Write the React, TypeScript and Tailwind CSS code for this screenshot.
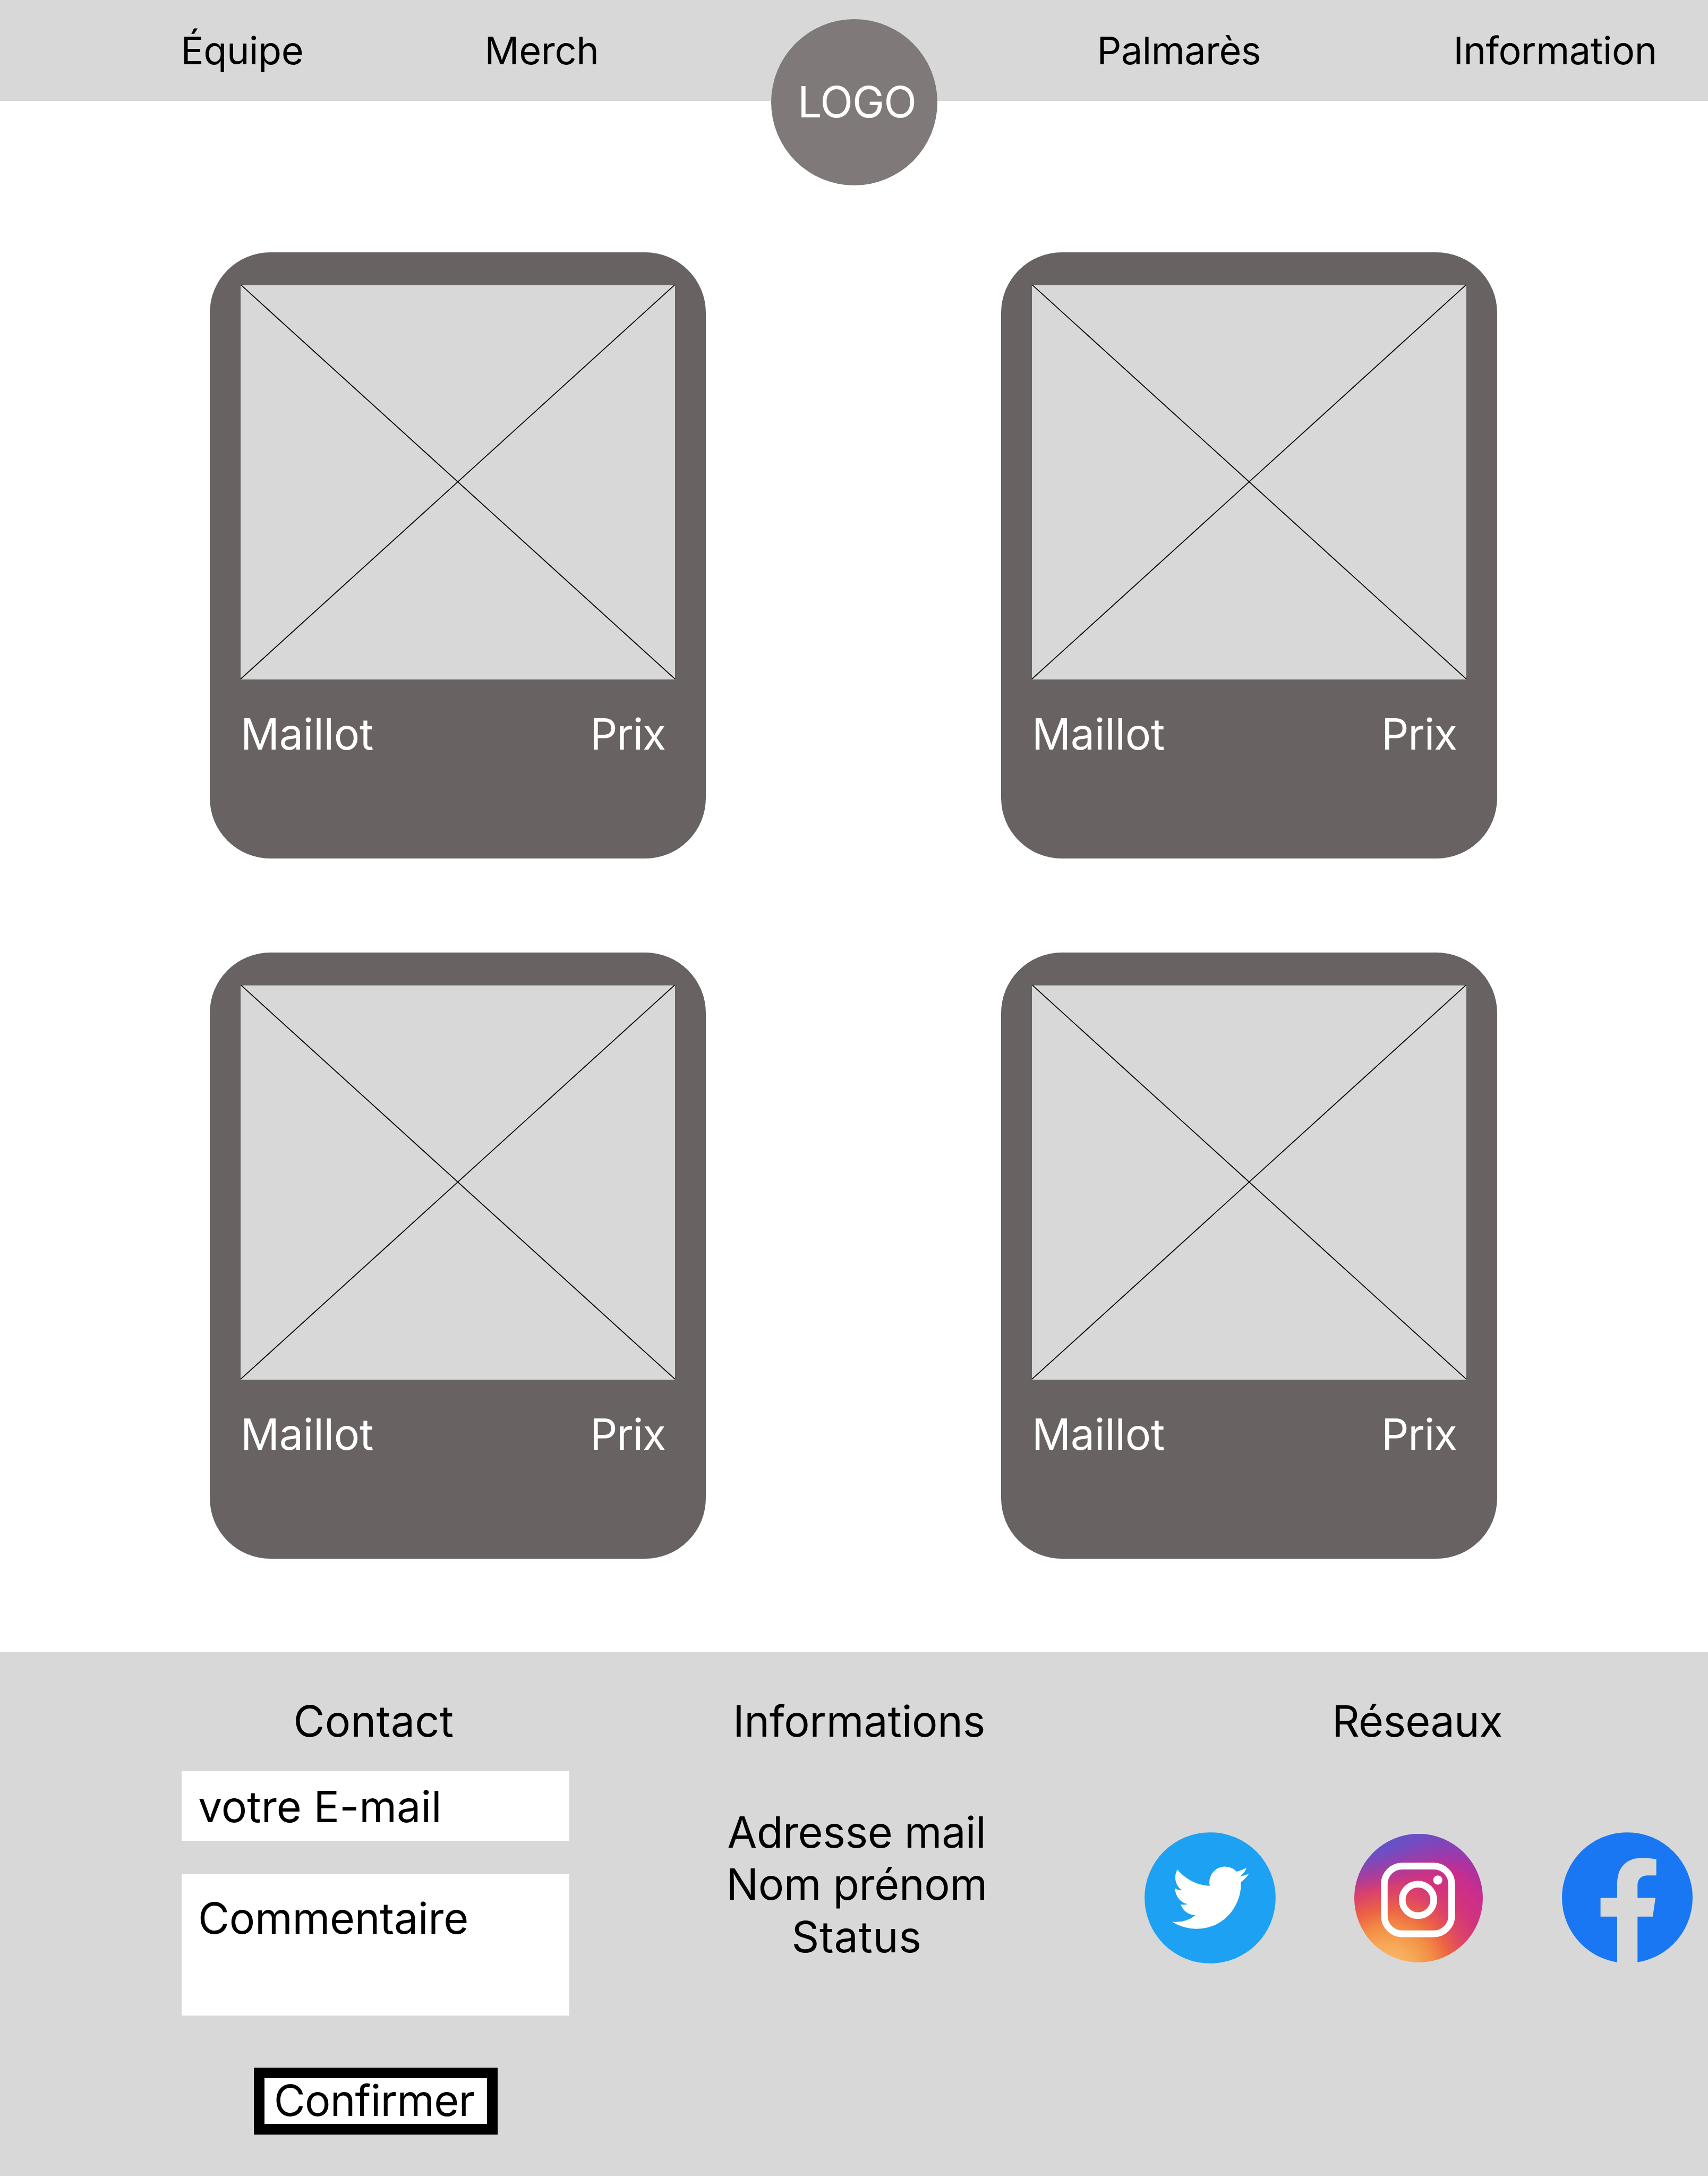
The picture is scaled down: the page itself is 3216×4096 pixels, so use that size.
import React from "react";

function Header() {
  return (
    <header className="relative h-[190px] bg-[#d8d8d8] text-[72px] leading-[88px]">
      <nav className="flex pt-[50.5px] pl-[340.5px] whitespace-nowrap">
        <a className="w-[572px] tracking-[-0.45px]">Équipe</a>
        <a className="w-[1153px] tracking-[-0.35px]">Merch</a>
        <a className="w-[671px] tracking-[-0.56px]">Palmarès</a>
        <a className="tracking-[-0.43px]">Information</a>
      </nav>
      <div className="absolute left-[1452px] top-[35.5px] flex h-[313px] w-[313px] items-center rounded-full bg-[#7f7a79] pl-[50px] text-[80.8px] tracking-[-1.1px] text-white">
        LOGO
      </div>
    </header>
  );
}

function ProductCard() {
  return (
    <article className="h-[1141px] w-[934px] rounded-[114px] bg-[#696262] px-[58px] pt-[62px] text-[80.8px] leading-[98px] text-white">
      <svg viewBox="0 0 818 742" className="block h-[742px] w-[818px] overflow-visible bg-[#d8d8d8]">
        <path d="M0.5 -0.8L818 741.2M817.5 -0.8L0 741.2" stroke="#000" strokeWidth="1.8" fill="none" />
      </svg>
      <div className="mt-[54px] flex">
        <span className="w-[658px] tracking-[-0.25px]">Maillot</span>
        <span className="tracking-[-1.3px]">Prix</span>
      </div>
    </article>
  );
}

function TwitterIcon() {
  return (
    <svg viewBox="180 212 921 922" className="h-[247px] w-[247px]">
      <circle cx="640.5" cy="673" r="460.5" fill="#1da1f2" />
      <path
        transform="translate(374 402.5) scale(22.42)"
        fill="#fff"
        d="M23.953 4.57a10 10 0 01-2.825.775 4.958 4.958 0 002.163-2.723c-.951.555-2.005.959-3.127 1.184a4.92 4.92 0 00-8.384 4.482C7.69 8.095 4.067 6.13 1.64 3.162a4.822 4.822 0 00-.666 2.475c0 1.71.87 3.213 2.188 4.096a4.904 4.904 0 01-2.228-.616v.06a4.923 4.923 0 003.946 4.827 4.996 4.996 0 01-2.212.085 4.936 4.936 0 004.604 3.417 9.867 9.867 0 01-6.102 2.105c-.39 0-.779-.023-1.17-.067a13.995 13.995 0 007.557 2.209c9.053 0 13.998-7.496 13.998-13.985 0-.21 0-.42-.015-.63A9.935 9.935 0 0024 4.59z"
      />
    </svg>
  );
}

function InstagramIcon() {
  return (
    <svg viewBox="155 159 902 902" className="h-[242px] w-[242px]">
      <defs>
        <radialGradient id="warm" gradientUnits="userSpaceOnUse" cx="398" cy="1131" r="1100">
          <stop offset="0.1" stopColor="#f9b465" />
          <stop offset="0.18" stopColor="#f6a855" />
          <stop offset="0.29" stopColor="#f28e46" />
          <stop offset="0.4" stopColor="#ec6344" />
          <stop offset="0.51" stopColor="#dc4468" />
          <stop offset="0.62" stopColor="#d2347c" />
          <stop offset="0.75" stopColor="#c92e8c" />
          <stop offset="0.82" stopColor="#b5309a" />
          <stop offset="0.92" stopColor="#983aae" />
        </radialGradient>
        <radialGradient
          id="cool"
          gradientUnits="userSpaceOnUse"
          cx="0"
          cy="0"
          r="1"
          gradientTransform="matrix(77 386 -1590 318 6 222)"
        >
          <stop offset="0.1" stopColor="#5557cf" />
          <stop offset="0.42" stopColor="#6b50c6" stopOpacity="0.92" />
          <stop offset="1" stopColor="#7b44c0" stopOpacity="0" />
        </radialGradient>
      </defs>
      <circle cx="606" cy="610" r="451" fill="url(#warm)" />
      <circle cx="606" cy="610" r="451" fill="url(#cool)" />
      <g fill="none" stroke="#fff" strokeWidth="47">
        <rect x="365.5" y="385" width="473" height="475" rx="126" />
        <circle cx="602" cy="622" r="110.5" />
      </g>
      <circle cx="741" cy="483" r="32" fill="#fff" />
    </svg>
  );
}

function FacebookIcon() {
  return (
    <svg viewBox="174 153 918 920" className="h-[247px] w-[246px]">
      <circle cx="633" cy="612" r="459" fill="#1977f3" />
      <path
        fill="#d8d8d8"
        d="M562 1075V745H445V613H562V512C562 396 631 332 737 332C788 332 837 341 837 341V455H779C722 455 705 490 705 526V613H831L812 745H705V1075Z"
      />
    </svg>
  );
}

function Footer() {
  return (
    <footer className="flex h-[986px] bg-[#d8d8d8] text-[80.8px] leading-[98px] whitespace-nowrap">
      <form className="ml-[342px] flex w-[730px] shrink-0 flex-col items-center pt-[81px]">
        <h2 className="mr-[7px] tracking-[0.27px]">Contact</h2>
        <div className="mt-[45px] h-[131px] w-full bg-white pl-[31px] pt-[18px]">votre E-mail</div>
        <div className="mt-[63px] h-[266px] w-full bg-white pl-[31px] pt-[34px] tracking-[-0.25px]">
          Commentaire
        </div>
        <button
          type="button"
          className="mt-[98px] h-[126px] w-[459px] border-[20px] border-black bg-white pb-[2px] pr-[5px] leading-[84px] tracking-[-0.8px]"
        >
          Confirmer
        </button>
      </form>
      <section className="ml-[291px] w-[500px] shrink-0 pt-[81px] text-center">
        <h2 className="pl-[9px] tracking-[-0.24px]">Informations</h2>
        <p className="mt-[111px] leading-[98.4px]">
          <span className="block tracking-[-0.41px]">Adresse mail</span>
          <span className="block tracking-[-0.38px]">Nom prénom</span>
          <span className="block tracking-[0.7px]">Status</span>
        </p>
      </section>
      <section className="ml-[291.5px] w-[1032.5px] shrink-0 pt-[81px]">
        <h2 className="pr-[5px] text-center tracking-[-0.73px]">Réseaux</h2>
        <div className="mt-[160px] flex items-center justify-between">
          <TwitterIcon />
          <InstagramIcon />
          <FacebookIcon />
        </div>
      </section>
    </footer>
  );
}

export default function App() {
  return (
    <div className="h-[4096px] w-[3216px] overflow-hidden bg-white font-[Inter,sans-serif] text-black">
      <Header />
      <main className="grid h-[2920px] grid-cols-[934px_934px] content-start gap-x-[556px] gap-y-[177px] pl-[395px] pt-[285px]">
        <ProductCard />
        <ProductCard />
        <ProductCard />
        <ProductCard />
      </main>
      <Footer />
    </div>
  );
}
